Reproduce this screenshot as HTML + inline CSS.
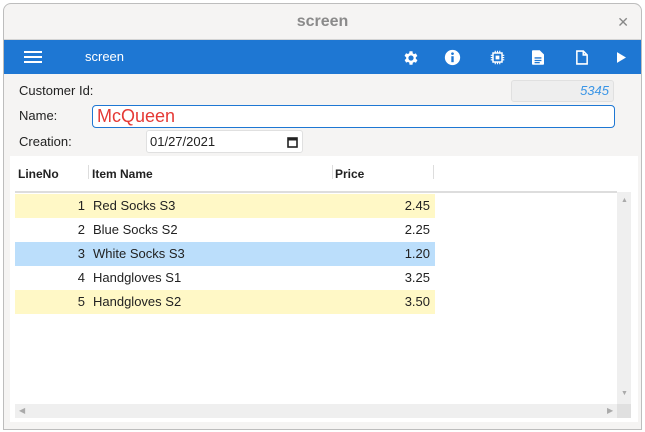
<!DOCTYPE html>
<html><head><meta charset="utf-8"><style>
*{box-sizing:border-box;margin:0;padding:0}
body{width:645px;height:432px;background:#fff;font-family:"Liberation Sans","DejaVu Sans",sans-serif;position:relative;overflow:hidden;font-size:13px;color:#222}
.win{position:absolute;left:3px;top:3px;width:639px;height:427px;border:1px solid #bdbdbd;border-radius:8px 8px 0 0;background:#f5f4f3;overflow:hidden}
.title{position:absolute;left:0;top:0;width:100%;height:36px;text-align:center;line-height:36px;font-size:16px;font-weight:bold;color:#8a8a8a;border-bottom:1px solid #d4d4d4}
.close{position:absolute;right:12px;top:0;line-height:36px;font-size:14px;color:#888;font-weight:bold}
.bar{position:absolute;left:0;top:36px;width:100%;height:34px;background:#1e77d3;color:#fff}
.abs{position:absolute}
.lbl{position:absolute;left:15px;font-size:13px;color:#222}
.row{position:absolute;left:11px;width:420px;height:24px;line-height:24px}
.row span{position:absolute}
.n{right:350px}.it{left:78px}.p{right:5px}
</style></head><body>
<div class="win">
<div class="title">screen</div><div class="close">✕</div>
<div class="bar">
 <div class="abs" style="left:20px;top:11px;width:18px;height:2px;background:#fff;box-shadow:0 5px 0 #fff,0 10px 0 #fff"></div>
 <div class="abs" style="left:81px;top:9px;font-size:13px">screen</div>
 <svg class="abs" style="left:398px;top:9px" width="18" height="18" viewBox="0 0 24 24"><path fill="#fff" d="M19.4 13a7.5 7.5 0 000-2l2.1-1.6-2-3.5-2.5 1a7 7 0 00-1.7-1L15 3h-4l-.4 2.7a7 7 0 00-1.7 1l-2.5-1-2 3.5L6.6 11a7.5 7.5 0 000 2l-2.1 1.6 2 3.5 2.5-1a7 7 0 001.7 1L11 21h4l.4-2.7a7 7 0 001.7-1l2.5 1 2-3.5zM13 15.5a3.5 3.5 0 110-7 3.5 3.5 0 010 7z" transform="translate(-1 0)"/></svg>
 <svg class="abs" style="left:440px;top:9px" width="17" height="17" viewBox="0 0 20 20"><circle cx="10" cy="10" r="9" fill="#fff"/><rect x="8.6" y="8.5" width="2.8" height="7" fill="#1e77d3"/><circle cx="10" cy="5.5" r="1.6" fill="#1e77d3"/></svg>
 <svg class="abs" style="left:486px;top:10px" width="15" height="15" viewBox="0 0 20 20"><rect x="4" y="4" width="12" height="12" fill="none" stroke="#fff" stroke-width="2"/><rect x="7.5" y="7.5" width="5" height="5" fill="#fff"/><path stroke="#fff" stroke-width="1.5" d="M7 1v3M10 1v3M13 1v3M7 16v3M10 16v3M13 16v3M1 7h3M1 10h3M1 13h3M16 7h3M16 10h3M16 13h3"/></svg>
 <svg class="abs" style="left:528px;top:10px" width="12" height="15" viewBox="0 0 14 17"><path fill="#fff" d="M0 1q0-1 1-1h8l5 5v11q0 1-1 1H1q-1 0-1-1z"/><path stroke="#1e77d3" stroke-width="1.5" d="M3 9h8M3 12h8M3 14.5h6"/></svg>
 <svg class="abs" style="left:572px;top:10px" width="12" height="15" viewBox="0 0 14 17"><path fill="none" stroke="#fff" stroke-width="1.8" d="M1 1h7.5l4.5 4.5V16H1zM8.5 1v4.5H13"/></svg>
 <svg class="abs" style="left:613px;top:12px" width="9" height="11" viewBox="0 0 10 12"><path fill="#fff" d="M0 0l10 6-10 6z"/></svg>
</div>
<div class="lbl" style="top:79px">Customer Id:</div>
<div class="abs" style="left:507px;top:76px;width:103px;height:22px;background:#eeeeee;border:1px solid #e0e0e0;border-radius:3px;color:#3a95e6;font-style:italic;text-align:right;padding-right:4px;line-height:20px">5345</div>
<div class="lbl" style="top:104px">Name:</div>
<div class="abs" style="left:88px;top:101px;width:523px;height:23px;background:#fff;border:1px solid #1e77d3;border-radius:4px;color:#e53935;font-size:18px;line-height:20px;padding-left:4px">McQueen</div>
<div class="lbl" style="top:130px">Creation:</div>
<div class="abs" style="left:142px;top:126px;width:157px;height:23px;background:#fff;border:1px solid #e0e0e0;border-radius:3px;line-height:21px;padding-left:3px">01/27/2021
 <svg class="abs" style="right:4px;top:5px" width="11" height="12" viewBox="0 0 11 12"><rect x="1" y="2" width="9" height="9" fill="none" stroke="#222" stroke-width="1.6"/><rect x="1" y="2" width="9" height="2.5" fill="#222"/></svg></div>
<div class="abs" style="left:6px;top:152px;width:628px;height:266px;background:#fff">
 <div class="abs" style="left:8px;top:11px;font-weight:bold;font-size:12px">LineNo</div>
 <div class="abs" style="left:78px;top:9px;width:1px;height:14px;background:#ddd"></div>
 <div class="abs" style="left:82px;top:11px;font-weight:bold;font-size:12px">Item Name</div>
 <div class="abs" style="left:322px;top:9px;width:1px;height:14px;background:#ddd"></div>
 <div class="abs" style="left:325px;top:11px;font-weight:bold;font-size:12px">Price</div>
 <div class="abs" style="left:423px;top:9px;width:1px;height:14px;background:#ddd"></div>
 <div class="abs" style="left:5px;top:35px;width:602px;height:2px;background:#ddd"></div>
 <div class="abs" style="left:607px;top:36px;width:14px;height:212px;background:#efefef"></div>
 <div class="abs" style="left:611px;top:41px;font-size:7px;color:#aaa">▲</div>
 <div class="abs" style="left:611px;top:234px;font-size:7px;color:#aaa">▼</div>
 <div class="abs" style="left:5px;top:248px;width:602px;height:14px;background:#efefef"></div>
 <div class="abs" style="left:607px;top:248px;width:14px;height:14px;background:#e0e0e0"></div>
 <div class="abs" style="left:9px;top:250px;font-size:8px;color:#aaa">◀</div>
 <div class="abs" style="left:597px;top:250px;font-size:8px;color:#aaa">▶</div>
</div>
<div class="row" style="top:190px;background:#fff8c6"><span class="n">1</span><span class="it">Red Socks S3</span><span class="p">2.45</span></div>
<div class="row" style="top:214px"><span class="n">2</span><span class="it">Blue Socks S2</span><span class="p">2.25</span></div>
<div class="row" style="top:238px;background:#bbdefb"><span class="n">3</span><span class="it">White Socks S3</span><span class="p">1.20</span></div>
<div class="row" style="top:262px"><span class="n">4</span><span class="it">Handgloves S1</span><span class="p">3.25</span></div>
<div class="row" style="top:286px;background:#fff8c6"><span class="n">5</span><span class="it">Handgloves S2</span><span class="p">3.50</span></div>
</div>
</body></html>
